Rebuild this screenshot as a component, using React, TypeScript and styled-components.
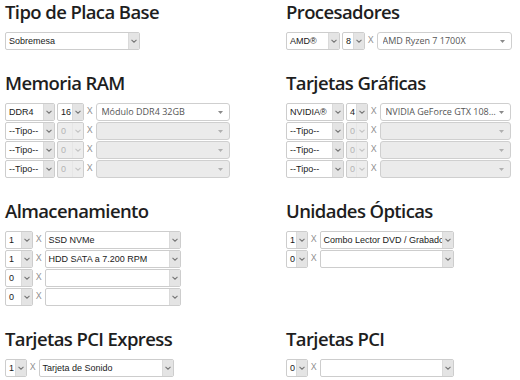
import React from "react";
import styled, { createGlobalStyle } from "styled-components";

const GlobalStyle = createGlobalStyle`
  html, body {
    margin: 0;
    padding: 0;
    background: #ffffff;
  }
  body {
    font-family: "Open Sans", "Liberation Sans", sans-serif;
    color: #222;
  }
`;

interface ISelect {
  w: number;
  value?: string;
  disabled?: boolean;
}

const Chevron: React.FC<{ light?: boolean }> = ({ light }) => (
  <svg width="6" height="4" viewBox="0 0 6 4">
    <polyline
      points="0.5,0.8 3,3.2 5.5,0.8"
      fill="none"
      stroke={light ? "#c4c4c4" : "#777"}
      strokeWidth="1.1"
    />
  </svg>
);

const Triangle: React.FC<{ light?: boolean }> = ({ light }) => (
  <svg width="5" height="3" viewBox="0 0 5 3">
    <polygon points="0,0 5,0 2.5,3" fill={light ? "#b0b0b0" : "#8a8a8a"} />
  </svg>
);

// plain browser select, grey arrow button on the right
const NativeSelect: React.FC<ISelect> = ({ w, value, disabled }) => (
  <NativeBox $w={w} $disabled={disabled}>
    <NativeValue $disabled={disabled}>{value}</NativeValue>
    <ArrowBox $disabled={disabled}>
      <Chevron light={disabled} />
    </ArrowBox>
  </NativeBox>
);

// select2-like dropdown, small triangle
const CustomSelect: React.FC<ISelect> = ({ w, value, disabled }) => (
  <CustomBox $w={w} $disabled={disabled}>
    <CustomValue>{value}</CustomValue>
    <Triangle light={disabled} />
  </CustomBox>
);

const App: React.FC = () => {
  const emptyRows = [1, 2, 3];

  return (
    <>
      <GlobalStyle />
      <Page>
        <Section>
          <Heading>Tipo de Placa Base</Heading>
          <Rows>
            <Row>
              <NativeSelect w={135} value="Sobremesa" />
            </Row>
          </Rows>
        </Section>

        <Section>
          <Heading>Procesadores</Heading>
          <Rows>
            <Row>
              <NativeSelect w={54} value="AMD®" />
              <NativeSelect w={23} value="8" />
              <Times>X</Times>
              <CustomSelect w={135} value="AMD Ryzen 7 1700X" />
            </Row>
          </Rows>
        </Section>

        <Section>
          <Heading>Memoria RAM</Heading>
          <Rows>
            <Row>
              <NativeSelect w={50} value="DDR4" />
              <NativeSelect w={27} value="16" />
              <Times>X</Times>
              <CustomSelect w={134} value="Módulo DDR4 32GB" />
            </Row>
            {emptyRows.map((i) => (
              <Row key={i}>
                <NativeSelect w={50} value="--Tipo--" />
                <NativeSelect w={27} value="0" disabled />
                <Times>X</Times>
                <CustomSelect w={134} disabled />
              </Row>
            ))}
          </Rows>
        </Section>

        <Section>
          <Heading>Tarjetas Gráficas</Heading>
          <Rows>
            <Row>
              <NativeSelect w={58} value="NVIDIA®" />
              <NativeSelect w={22} value="4" />
              <Times>X</Times>
              <CustomSelect w={131} value="NVIDIA GeForce GTX 108…" />
            </Row>
            {emptyRows.map((i) => (
              <Row key={i}>
                <NativeSelect w={58} value="--Tipo--" />
                <NativeSelect w={22} value="0" disabled />
                <Times>X</Times>
                <CustomSelect w={131} disabled />
              </Row>
            ))}
          </Rows>
        </Section>

        <Section>
          <Heading>Almacenamiento</Heading>
          <Rows>
            <Row>
              <NativeSelect w={28} value="1" />
              <Times>X</Times>
              <NativeSelect w={136} value="SSD NVMe" />
            </Row>
            <Row>
              <NativeSelect w={28} value="1" />
              <Times>X</Times>
              <NativeSelect w={136} value="HDD SATA a 7.200 RPM" />
            </Row>
            <Row>
              <NativeSelect w={28} value="0" />
              <Times>X</Times>
              <NativeSelect w={136} />
            </Row>
            <Row>
              <NativeSelect w={28} value="0" />
              <Times>X</Times>
              <NativeSelect w={136} />
            </Row>
          </Rows>
        </Section>

        <Section>
          <Heading>Unidades Ópticas</Heading>
          <Rows>
            <Row>
              <NativeSelect w={22} value="1" />
              <Times>X</Times>
              <NativeSelect w={134} value="Combo Lector DVD / Grabador" />
            </Row>
            <Row>
              <NativeSelect w={22} value="0" />
              <Times>X</Times>
              <NativeSelect w={134} />
            </Row>
          </Rows>
        </Section>

        <Section>
          <Heading>Tarjetas PCI Express</Heading>
          <Rows>
            <Row>
              <NativeSelect w={22} value="1" />
              <Times>X</Times>
              <NativeSelect w={135} value="Tarjeta de Sonido" />
            </Row>
          </Rows>
        </Section>

        <Section>
          <Heading>Tarjetas PCI</Heading>
          <Rows>
            <Row>
              <NativeSelect w={22} value="0" />
              <Times>X</Times>
              <NativeSelect w={134} />
            </Row>
          </Rows>
        </Section>
      </Page>
    </>
  );
};

const Page = styled.div`
  display: grid;
  grid-template-columns: 281px 1fr;
  row-gap: 21px;
  padding: 0 0 0 5px;
  width: 520px;
  box-sizing: border-box;
`;

const Section = styled.section`
  display: flex;
  flex-direction: column;
`;

const Heading = styled.h2`
  margin: 0 0 8px;
  font-family: "Open Sans", "Noto Sans", sans-serif;
  font-weight: 600;
  font-size: 18.5px;
  line-height: 24px;
  color: #1e1e1e;
  letter-spacing: -0.6px;
  white-space: nowrap;
`;

const Rows = styled.div`
  display: flex;
  flex-direction: column;
  gap: 1px;
`;

const Row = styled.div`
  display: flex;
  align-items: flex-start;
  gap: 2px;
`;

const NativeBox = styled.div<{ $w: number; $disabled?: boolean }>`
  display: flex;
  align-items: stretch;
  width: ${(p) => p.$w}px;
  height: 18px;
  box-sizing: border-box;
  border: 1px solid #cdcdcd;
  border-radius: 2px;
  background: ${(p) => (p.$disabled ? "#ededed" : "#ffffff")};
  overflow: hidden;
`;

const NativeValue = styled.span<{ $disabled?: boolean }>`
  flex: 1;
  min-width: 0;
  padding-left: 3px;
  font-family: "Liberation Sans", Arial, sans-serif;
  font-size: 9px;
  line-height: 16px;
  color: ${(p) => (p.$disabled ? "#b4b4b4" : "#1a1a1a")};
  white-space: nowrap;
  overflow: hidden;
`;

const ArrowBox = styled.span<{ $disabled?: boolean }>`
  flex: 0 0 10px;
  display: flex;
  align-items: center;
  justify-content: center;
  background: ${(p) => (p.$disabled ? "#ededed" : "#e4e4e4")};
  border-left: 1px solid ${(p) => (p.$disabled ? "#e6e6e6" : "#dadada")};
`;

const CustomBox = styled.div<{ $w: number; $disabled?: boolean }>`
  display: flex;
  align-items: center;
  width: ${(p) => p.$w}px;
  height: 18px;
  box-sizing: border-box;
  padding: 0 6px 0 5px;
  border: 1px solid #cfcfcf;
  border-radius: 3px;
  background: ${(p) => (p.$disabled ? "#ebebeb" : "#ffffff")};
`;

const CustomValue = styled.span`
  flex: 1;
  min-width: 0;
  padding-right: 2px;
  font-family: "Open Sans", "Noto Sans", sans-serif;
  font-size: 9px;
  line-height: 16px;
  color: #555;
  white-space: nowrap;
  overflow: hidden;
  text-overflow: ellipsis;
`;

const Times = styled.span`
  margin: 0 1px;
  font-family: "Open Sans", "Noto Sans", sans-serif;
  font-size: 9.5px;
  line-height: 16px;
  color: #8c8c8c;
`;

export default App;
